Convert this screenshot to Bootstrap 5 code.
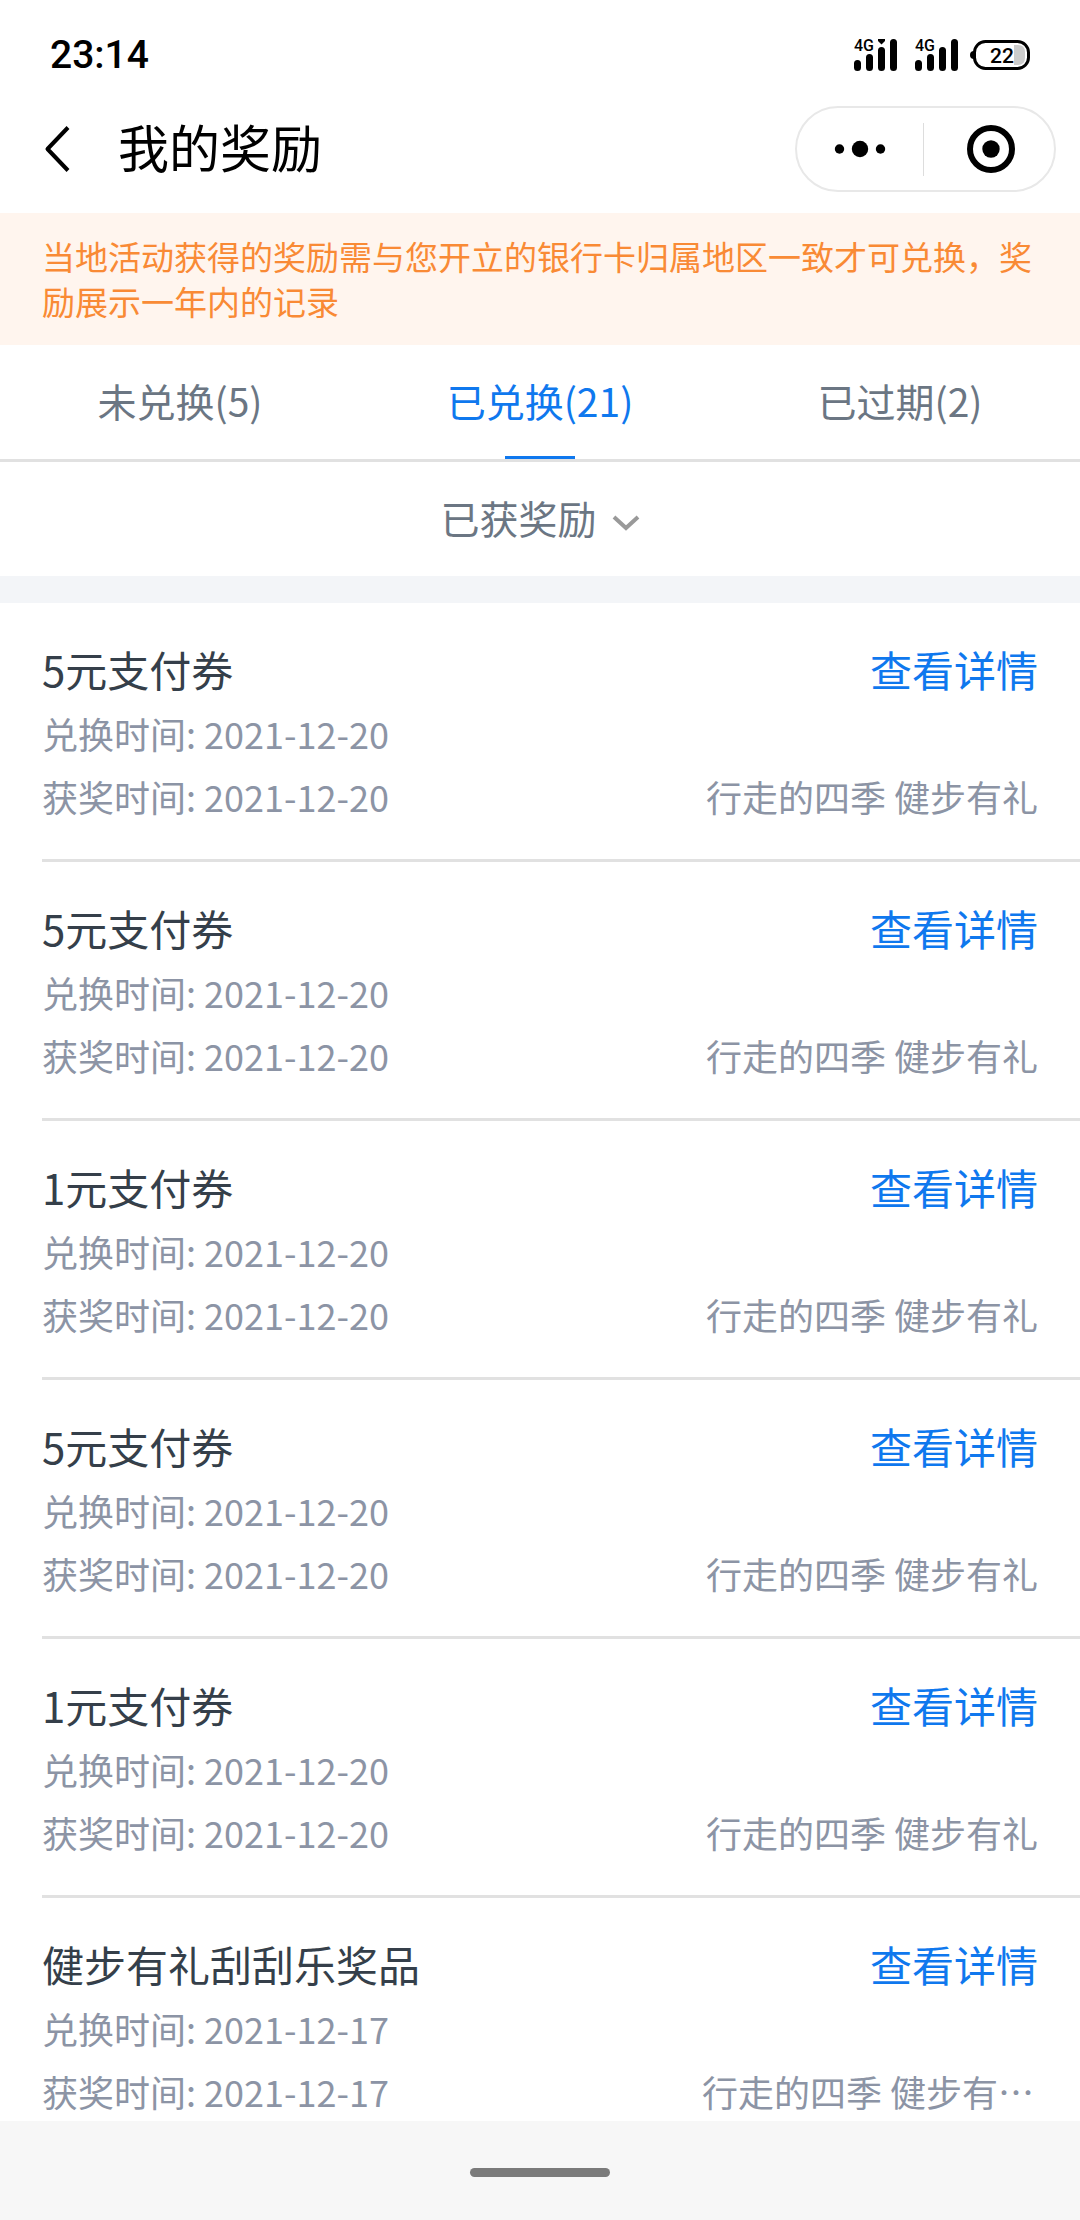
<!DOCTYPE html>
<html lang="zh-CN">
<head>
<meta charset="utf-8">
<meta name="viewport" content="width=device-width, initial-scale=1">
<title>我的奖励</title>
<link rel="stylesheet" href="https://cdn.jsdelivr.net/npm/bootstrap@5.3.0/dist/css/bootstrap.min.css">
<style>
  :root { --blue: #0f78ee; --ink: #353f4a; --soft: #8c94a5; --tab: #6b7683; --line: #e1e1e1; --gutter: 42px; }
  body { font-family: "Noto Sans CJK SC", "Noto Sans", sans-serif; color: var(--ink); background: #fff; }
  svg { display: block; flex: none; }
  .status-bar { height: 106px; padding: 3px 50px 0; font-family: Roboto, sans-serif; color: #000; }
  .clock { font-size: 39px; line-height: 48px; font-weight: 500; }
  .signals { gap: 18px; }
  .status-icons { gap: 12px; }
  .status-icons text { font-family: Roboto, sans-serif; font-weight: 500; }
  .title-bar { padding: 0 24px 21px 41px; color: #000; }
  .title-bar h1 { font-size: 51px; line-height: 66px; font-weight: 400; margin: 0 0 0 45px; padding-bottom: 6px; }
  .capsule { height: 86px; width: 261px; border: 2px solid #e8e8e8; border-radius: 43px; }
  .capsule button { flex: 1 1 0; }
  .capsule .rule { width: 1px; height: 53px; background: #ddd; }
  .notice { background: #fff5ee; color: #f98a35; font-size: 33px; line-height: 45px; padding: 21px var(--gutter); }
  .reward-tabs { border-bottom: 3px solid var(--line); }
  .reward-tabs .nav-link { position: relative; height: 114px; padding: 0 0 4px; font-size: 39px; line-height: 60px; color: var(--tab); background: none; border: 0; border-radius: 0; }
  .reward-tabs .nav-link.active { color: var(--blue); }
  .reward-tabs .nav-link.active::after { content: ""; position: absolute; bottom: 0; left: 50%; width: 70px; height: 3px; margin-left: -35px; background: var(--blue); }
  .filter-row { height: 114px; gap: 14px; color: var(--tab); }
  .filter-row select { appearance: none; border: 0; background: none; padding: 0 0 4px; color: inherit; font-size: 39px; line-height: 60px; }
  .filter-row svg { margin-top: 8px; }
  .band { height: 27px; background: #f3f5f8; }
  .rewards { padding-left: var(--gutter); }
  .reward { padding: 32px var(--gutter) 31px 0; border-bottom: 3px solid var(--line); }
  .reward h2, .reward .detail { font-size: 42px; line-height: 67px; font-weight: 400; margin: 0; color: var(--ink); }
  .reward .detail { color: var(--blue); }
  .reward p { font-size: 36px; line-height: 63px; margin: 0; color: var(--soft); }
  .reward .activity { width: 336px; }
  .home-bar { height: 99px; background: #f7f7f7; padding-top: 4px; }
  .home-bar span { width: 140px; height: 9px; border-radius: 5px; background: #7b7b7b; }
</style>
</head>
<body>
<header>
  <div class="status-bar d-flex align-items-center justify-content-between">
    <span class="clock">23:14</span>
    <div class="status-icons d-flex align-items-center">
      <div class="signals d-flex">
        <svg width="43" height="48" viewBox="0 -8 43 48" role="img" aria-label="4G">
          <g stroke="#000" stroke-width="7" stroke-linecap="round"><path d="M3.500 24.500V28.500M15.500 18.500V28.500M27.500 11.500V28.500M39.500 3.500V28.500"/></g>
          <path d="M24 0h7v2l-3.500 3.500L24 2z"/><text x="0" y="12" font-size="16">4G</text>
        </svg>
        <svg width="43" height="48" viewBox="0 -8 43 48" role="img" aria-label="4G">
          <g stroke="#000" stroke-width="7" stroke-linecap="round"><path d="M3.500 24.500V28.500M15.500 18.500V28.500M27.500 11.500V28.500M39.500 3.500V28.500"/></g>
          <text x="0" y="12" font-size="16">4G</text>
        </svg>
      </div>
      <svg width="60" height="30" viewBox="0 0 60 30" role="img" aria-label="22%">
        <path d="M4 11a4 4 0 0 0 0 8z"/>
        <rect x="4.500" y="1.500" width="54" height="27" rx="11" fill="#fff" stroke="#000" stroke-width="3"/>
        <path d="M44 5h4q7 0 7 7v6q0 7-7 7h-4z" fill="#ccc"/>
        <text x="20" y="22.500" font-size="21">22</text>
      </svg>
    </div>
  </div>
  <div class="title-bar d-flex align-items-center">
    <button type="button" class="btn p-0 border-0" aria-label="返回">
      <svg width="32" height="46" viewBox="0 0 32 46" fill="none" stroke="#000" stroke-width="4" stroke-linejoin="round"><path d="M27 1.500L6.500 23L27 44.500"/></svg>
    </button>
    <h1>我的奖励</h1>
    <div class="capsule d-flex align-items-center ms-auto">
      <button type="button" class="btn p-0 border-0 d-flex justify-content-center" aria-label="更多">
        <svg width="52" height="18" viewBox="0 0 52 18"><circle cx="5.500" cy="9" r="4.700"/><circle cx="26" cy="9" r="8.200"/><circle cx="46.500" cy="9" r="4.700"/></svg>
      </button>
      <span class="rule"></span>
      <button type="button" class="btn p-0 ps-1 border-0 d-flex justify-content-center" aria-label="关闭">
        <svg width="48" height="48" viewBox="0 0 48 48"><circle cx="24" cy="24" r="21" fill="none" stroke="#000" stroke-width="6"/><circle cx="24" cy="24" r="8.700"/></svg>
      </button>
    </div>
  </div>
</header>
<main>
  <div class="notice">当地活动获得的奖励需与您开立的银行卡归属地区一致才可兑换，奖励展示一年内的记录</div>
  <ul class="reward-tabs nav nav-justified">
    <li class="nav-item"><button type="button" class="nav-link">未兑换(5)</button></li>
    <li class="nav-item"><button type="button" class="nav-link active" aria-current="page">已兑换(21)</button></li>
    <li class="nav-item"><button type="button" class="nav-link">已过期(2)</button></li>
  </ul>
  <label class="filter-row d-flex align-items-center justify-content-center">
    <select aria-label="奖励类型"><option>已获奖励</option></select>
    <svg width="28" height="18" viewBox="0 0 28 18" fill="none" stroke="#999" stroke-width="4"><path d="M2 3L14 14L26 3"/></svg>
  </label>
  <div class="band"></div>
  <div class="rewards">
    <article class="reward">
      <div class="d-flex justify-content-between"><h2>5元支付券</h2><a href="#" class="detail text-decoration-none">查看详情</a></div>
      <p>兑换时间: 2021-12-20</p>
      <div class="d-flex justify-content-between"><p>获奖时间: 2021-12-20</p><p class="activity text-end">行走的四季 健步有礼</p></div>
    </article>
    <article class="reward">
      <div class="d-flex justify-content-between"><h2>5元支付券</h2><a href="#" class="detail text-decoration-none">查看详情</a></div>
      <p>兑换时间: 2021-12-20</p>
      <div class="d-flex justify-content-between"><p>获奖时间: 2021-12-20</p><p class="activity text-end">行走的四季 健步有礼</p></div>
    </article>
    <article class="reward">
      <div class="d-flex justify-content-between"><h2>1元支付券</h2><a href="#" class="detail text-decoration-none">查看详情</a></div>
      <p>兑换时间: 2021-12-20</p>
      <div class="d-flex justify-content-between"><p>获奖时间: 2021-12-20</p><p class="activity text-end">行走的四季 健步有礼</p></div>
    </article>
    <article class="reward">
      <div class="d-flex justify-content-between"><h2>5元支付券</h2><a href="#" class="detail text-decoration-none">查看详情</a></div>
      <p>兑换时间: 2021-12-20</p>
      <div class="d-flex justify-content-between"><p>获奖时间: 2021-12-20</p><p class="activity text-end">行走的四季 健步有礼</p></div>
    </article>
    <article class="reward">
      <div class="d-flex justify-content-between"><h2>1元支付券</h2><a href="#" class="detail text-decoration-none">查看详情</a></div>
      <p>兑换时间: 2021-12-20</p>
      <div class="d-flex justify-content-between"><p>获奖时间: 2021-12-20</p><p class="activity text-end">行走的四季 健步有礼</p></div>
    </article>
    <article class="reward">
      <div class="d-flex justify-content-between"><h2>健步有礼刮刮乐奖品</h2><a href="#" class="detail text-decoration-none">查看详情</a></div>
      <p>兑换时间: 2021-12-17</p>
      <div class="d-flex justify-content-between"><p>获奖时间: 2021-12-17</p><p class="activity">行走的四季 健步有…</p></div>
    </article>
  </div>
</main>
<footer class="home-bar fixed-bottom d-flex align-items-center justify-content-center"><span></span></footer>
<script src="https://cdn.jsdelivr.net/npm/bootstrap@5.3.0/dist/js/bootstrap.bundle.min.js"></script>
</body>
</html>
